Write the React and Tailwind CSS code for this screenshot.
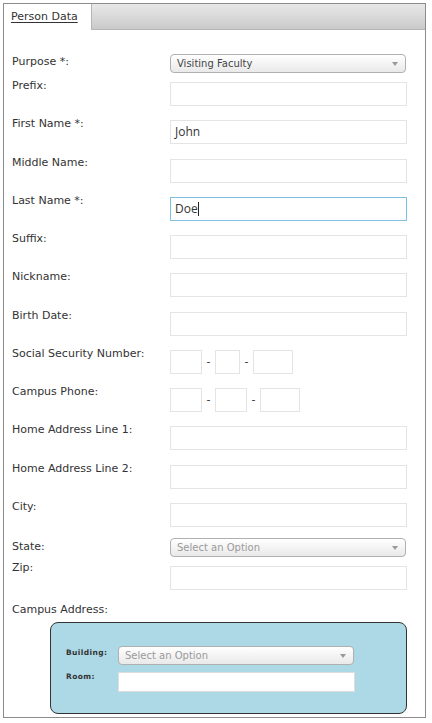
const font = { fontFamily: '"DejaVu Sans", Verdana, sans-serif' };

function Label({ children, className = '' }) {
  return (
    <div className={`w-[158px] shrink-0 text-[11px] leading-[14px] text-[#333] ${className}`}>{children}</div>
  );
}

function TextInput({ value, className = 'w-[237px]', focused }) {
  return (
    <div
      className={`h-[24px] border ${focused ? 'border-[#7ec0e0]' : 'border-[#e4e4e4]'} bg-white px-[4px] flex items-center text-[12px] text-[#333] ${className}`}
      style={{ fontFamily: '"Open Sans", "Noto Sans", sans-serif' }}
    >
      {value}
      {focused && <span className="inline-block w-px h-[14px] bg-[#222]" />}
    </div>
  );
}

function Select({ value, placeholder, className = 'w-[236px]', h = 'h-[19px]' }) {
  return (
    <div className={`${h} ${className} rounded-[4px] border border-[#b0b0b0] bg-gradient-to-b from-white to-[#e9e9e9] flex items-center justify-between pl-[6px] pr-[7px] shadow-[inset_0_1px_0_#fff]`}>
      <span className={`text-[10px] leading-none ${placeholder ? 'text-[#9a9a9a]' : 'text-[#444]'}`}>{value}</span>
      <span className="w-0 h-0 border-l-[3px] border-r-[3px] border-t-[4px] border-l-transparent border-r-transparent border-t-[#999]" />
    </div>
  );
}

function Row({ label, children }) {
  return (
    <div className="flex items-start h-[38.27px]">
      <Label>{label}</Label>
      <div className="mt-[3px] flex items-center">{children}</div>
    </div>
  );
}

function Dash() {
  return <span className="w-[13px] text-center text-[11px] text-[#333]">-</span>;
}

export default function App() {
  return (
    <div className="w-[432px] h-[723px] bg-white pt-[3px] pl-[3px]" style={font}>
      <div className="w-[423px] h-[715px] border border-[#8c8c8c] flex flex-col">
        {/* Tabs */}
        <div className="h-[26px] flex bg-gradient-to-b from-[#e8e8e8] to-[#c9c9c9] shrink-0">
          <div className="w-[88px] h-full bg-white border-r border-[#b5b5b5] flex items-center pl-[7px]">
            <span className="text-[11px] text-[#333] underline underline-offset-2">Person Data</span>
          </div>
          <div className="flex-1 border-b border-[#b5b5b5]" />
        </div>

        {/* Body */}
        <div className="pl-[8px] pt-[25px] flex flex-col">
          <div className="flex items-start h-[24px]">
            <Label>Purpose *:</Label>
            <div className="-mt-[1px]"><Select value="Visiting Faculty" /></div>
          </div>
          <Row label="Prefix:"><TextInput /></Row>
          <Row label="First Name *:"><TextInput value="John" /></Row>
          <Row label="Middle Name:"><TextInput /></Row>
          <Row label="Last Name *:"><TextInput value="Doe" focused /></Row>
          <Row label="Suffix:"><TextInput /></Row>
          <Row label="Nickname:"><TextInput /></Row>
          <Row label="Birth Date:"><TextInput /></Row>
          <Row label="Social Security Number:">
            <TextInput className="w-[32px]" />
            <Dash />
            <TextInput className="w-[25px]" />
            <Dash />
            <TextInput className="w-[40px]" />
          </Row>
          <Row label="Campus Phone:">
            <TextInput className="w-[32px]" />
            <Dash />
            <TextInput className="w-[32px]" />
            <Dash />
            <TextInput className="w-[40px]" />
          </Row>
          <Row label="Home Address Line 1:"><TextInput /></Row>
          <Row label="Home Address Line 2:"><TextInput /></Row>
          <Row label="City:"><TextInput /></Row>

          <div className="flex items-start h-[23px]">
            <Label className="mt-[2px]">State:</Label>
            <Select value="Select an Option" placeholder />
          </div>
          <div className="flex items-start h-[41px]">
            <Label>Zip:</Label>
            <div className="mt-[5px]"><TextInput /></div>
          </div>
          <Label className="text-[11.5px] w-auto mt-[1px]">Campus Address:</Label>

          <div className="ml-[38px] mt-[5px] w-[357px] h-[92px] rounded-[8px] border border-[#333] bg-[#add8e6] pl-[15px] pt-[23px] flex flex-col">
            <div className="flex items-start h-[26px]">
              <div className="w-[52px] text-[7.5px] leading-[10px] tracking-[0.4px] text-[#333] mt-[2px] font-semibold">Building:</div>
              <Select value="Select an Option" placeholder className="w-[236px]" h="h-[19px]" />
            </div>
            <div className="flex items-start">
              <div className="w-[52px] text-[7.5px] leading-[10px] tracking-[0.4px] text-[#333] font-semibold">Room:</div>
              <div className="h-[20px] w-[237px] bg-white border border-[#ddd]" />
            </div>
          </div>
        </div>
      </div>
    </div>
  );
}
